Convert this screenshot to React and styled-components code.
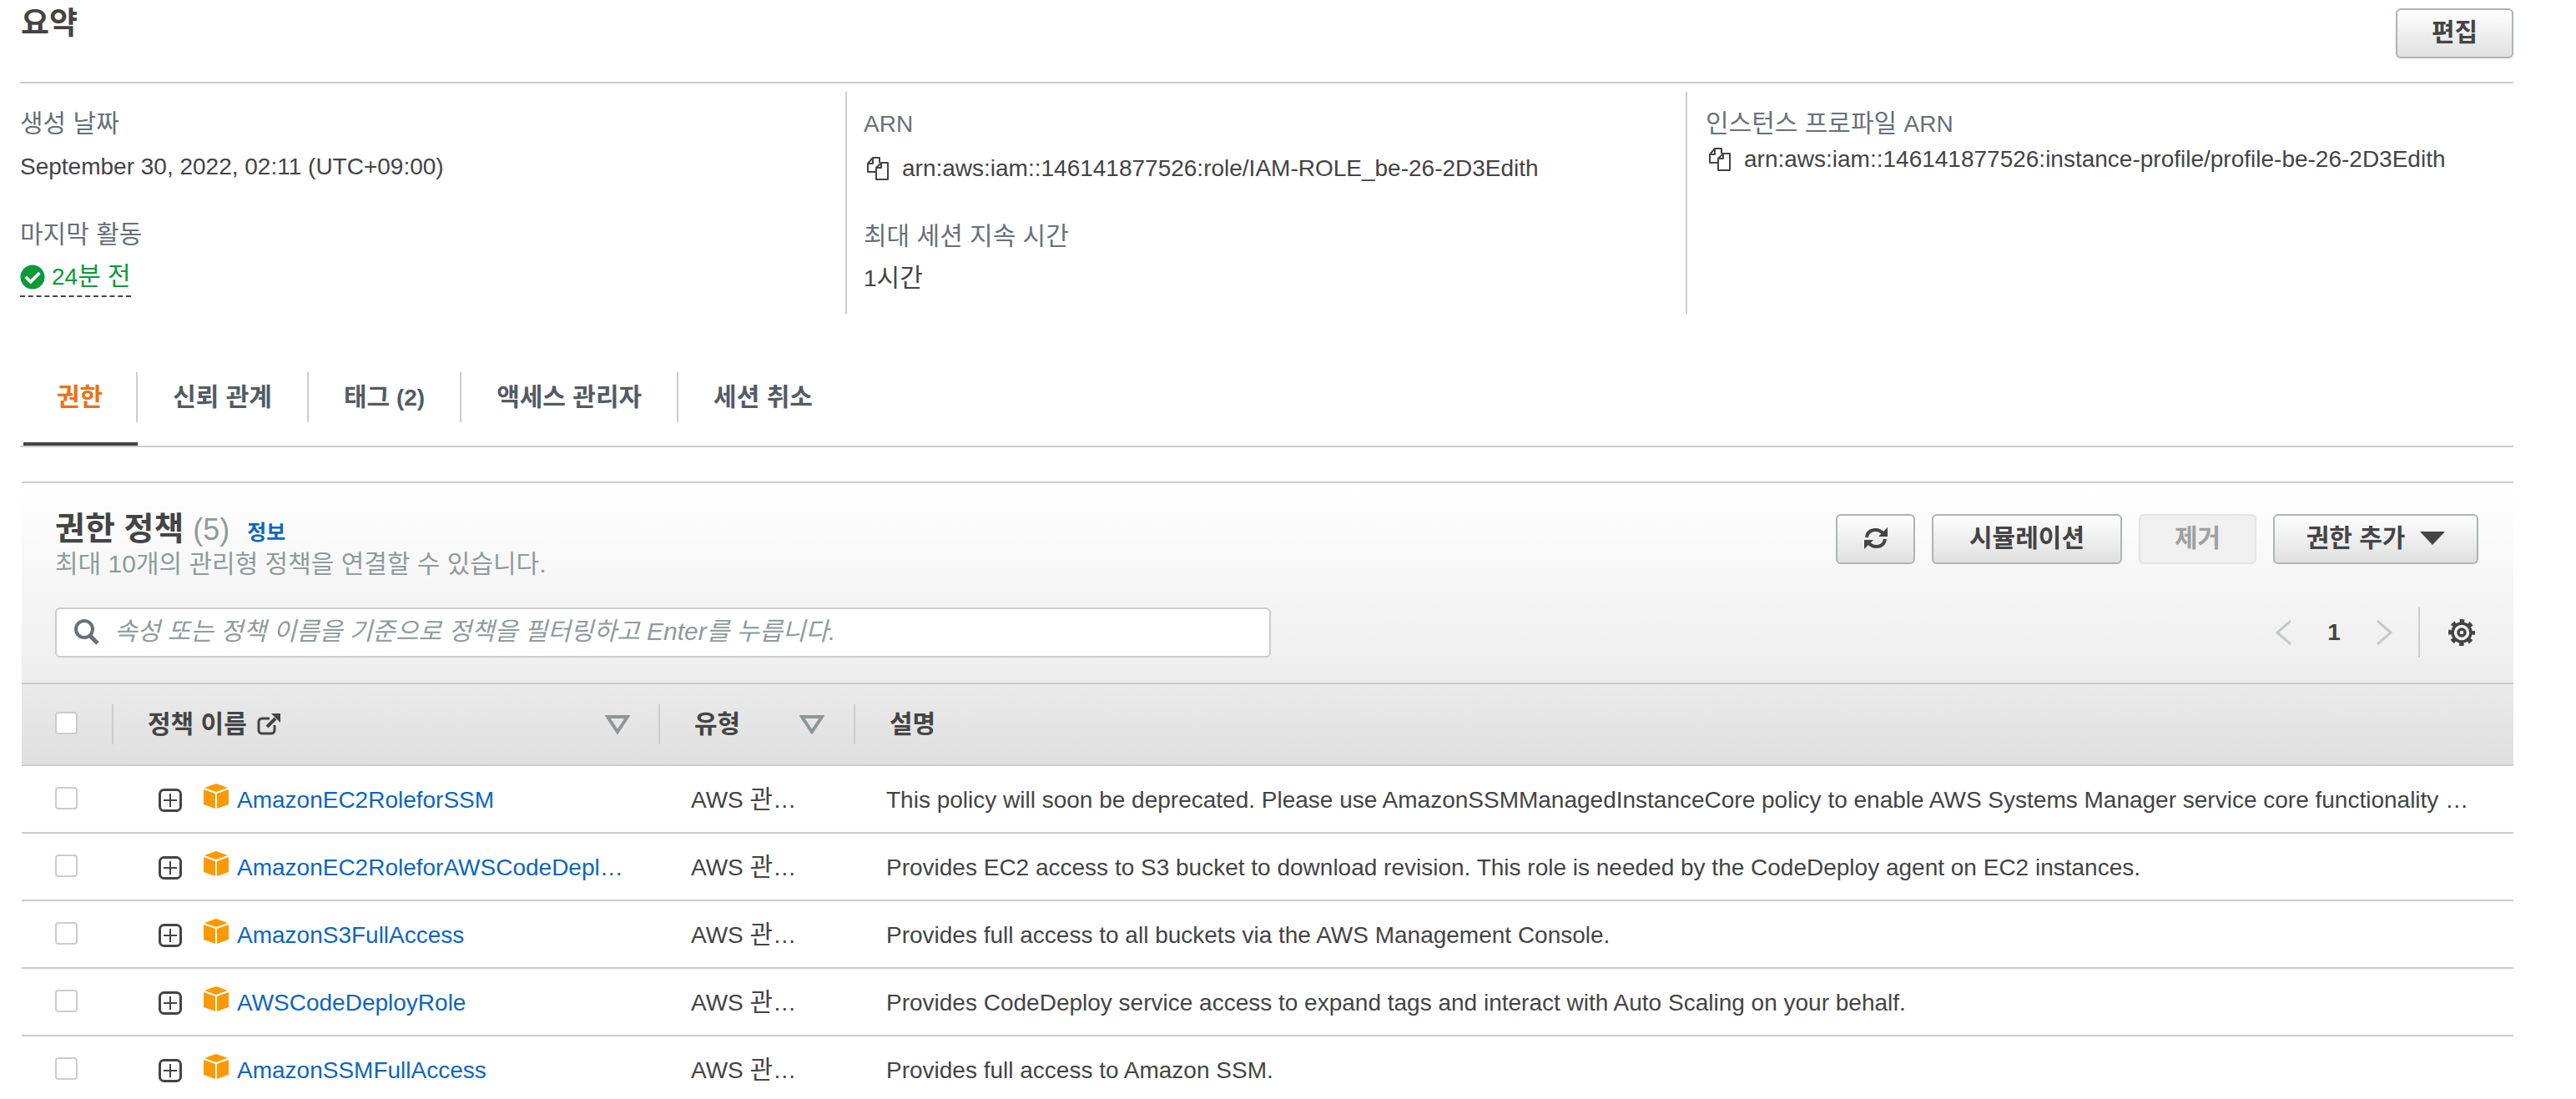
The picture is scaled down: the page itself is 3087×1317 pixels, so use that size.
import React from "react";
import styled, { createGlobalStyle } from "styled-components";
import { FaCheckCircle } from "react-icons/fa";

const FONT = '"Liberation Sans", "Noto Sans CJK KR", sans-serif';

const colors = {
  border: "#cccccc",
  label: "#687078",
  text: "#444444",
  link: "#0e66bf",
  green: "#0a9a3a",
  orange: "#ec7211",
  muted: "#8f9b9c",
};

const policies = [
  {
    name: "AmazonEC2RoleforSSM",
    desc: "This policy will soon be deprecated. Please use AmazonSSMManagedInstanceCore policy to enable AWS Systems Manager service core functionality on EC2.",
  },
  {
    name: "AmazonEC2RoleforAWSCodeDeployRole",
    desc: "Provides EC2 access to S3 bucket to download revision. This role is needed by the CodeDeploy agent on EC2 instances.",
  },
  {
    name: "AmazonS3FullAccess",
    desc: "Provides full access to all buckets via the AWS Management Console.",
  },
  {
    name: "AWSCodeDeployRole",
    desc: "Provides CodeDeploy service access to expand tags and interact with Auto Scaling on your behalf.",
  },
  {
    name: "AmazonSSMFullAccess",
    desc: "Provides full access to Amazon SSM.",
  },
];

const tabs = ["권한", "신뢰 관계", "태그", "액세스 관리자", "세션 취소"];

const CopyIcon = () => (
  <svg width="28" height="28" viewBox="0 0 28 28" fill="none" stroke="#444" strokeWidth="2" strokeLinejoin="round">
    <path d="M11 18H2V8l6-7h8v6" />
    <path d="M8 1v7H2" />
    <path d="M12 13l6-6h8v20H12z" />
    <path d="M18 7v6h-6" />
  </svg>
);

const SearchIcon = () => (
  <svg width="32" height="32" viewBox="0 0 32 32" fill="none" stroke="#687078">
    <circle cx="13" cy="13" r="10" strokeWidth="4" />
    <path d="M20 21l9 9" strokeWidth="5" />
  </svg>
);

const RefreshIcon = () => (
  <svg width="30" height="28" viewBox="0 0 30 28" fill="none" stroke="#444" strokeWidth="4">
    <path d="M4 13C5 3 18 1 24 9" />
    <path d="M26 15C25 25 12 27 6 19" />
    <path d="M29 1v11H18z" fill="#444" stroke="none" />
    <path d="M1 27V16h11z" fill="#444" stroke="none" />
  </svg>
);

const ExternalIcon = () => (
  <svg width="28" height="26" viewBox="0 0 28 26" fill="none" stroke="#444">
    <path d="M15 6H6a4 4 0 0 0-4 4v10a4 4 0 0 0 4 4h11a4 4 0 0 0 4-4v-6" strokeWidth="3" />
    <path d="M12 16L22 6" strokeWidth="4" />
    <path d="M17 0h11v11z" fill="#444" stroke="none" />
  </svg>
);

const SortIcon = () => (
  <svg width="30" height="24" viewBox="0 0 30 24" fill="none" stroke="#8f9596" strokeWidth="4">
    <path d="M3 3h24L15 21z" />
  </svg>
);

const GearIcon = () => (
  <svg width="32" height="32" viewBox="0 0 32 32" fill="none" stroke="#444">
    <circle cx="16" cy="16" r="4" strokeWidth="3.500" />
    <circle cx="16" cy="16" r="11" strokeWidth="3.500" />
    <circle cx="16" cy="16" r="14" strokeWidth="4" strokeDasharray="5.500 5.500" strokeDashoffset="2.750" />
  </svg>
);

const PlusIcon = () => (
  <svg width="28" height="28" viewBox="0 0 28 28" fill="none" stroke="#444">
    <rect x="1.500" y="1.500" width="25" height="25" rx="5" strokeWidth="3" />
    <path d="M14 6v16M6 14h16" strokeWidth="2" />
  </svg>
);

const CubeIcon = () => (
  <svg width="30" height="30" viewBox="0 0 30 30" fill="#ff9900">
    <path d="M15 0l14 5-14 5L1 5z" />
    <path d="M0 7l14 5v18L0 25z" />
    <path d="M30 7l-14 5v18l14-5z" />
  </svg>
);

const ChevronIcon = ({ flip }) => (
  <svg width="20" height="30" viewBox="0 0 20 30" fill="none" stroke="#c4c8c9" strokeWidth="3">
    <path d={flip ? "M2 1l16 14L2 29" : "M18 1L2 15l16 14"} />
  </svg>
);

const App = () => (
  <Page>
    <GlobalStyle />

    <SummaryHeader>
      <PageTitle>요약</PageTitle>
      <Button>편집</Button>
    </SummaryHeader>

    <SummaryGrid>
      <SummaryColumn>
        <FieldLabel>생성 날짜</FieldLabel>
        <FieldValue>September 30, 2022, 02:11 (UTC+09:00)</FieldValue>
        <FieldLabel $spaced>마지막 활동</FieldLabel>
        <FieldValue $gap={18}>
          <StatusText>
            <FaCheckCircle size={30} />
            <span>
              24<Hangul>분 전</Hangul>
            </span>
          </StatusText>
        </FieldValue>
      </SummaryColumn>

      <SummaryColumn $divided>
        <FieldLabel>
          <Latin>ARN</Latin>
        </FieldLabel>
        <FieldValue $gap={21}>
          <CopyLine>
            <CopyIcon />
            arn:aws:iam::146141877526:role/IAM-ROLE_be-26-2D3Edith
          </CopyLine>
        </FieldValue>
        <FieldLabel $spaced>최대 세션 지속 시간</FieldLabel>
        <FieldValue $gap={18}>
          1<Hangul>시간</Hangul>
        </FieldValue>
      </SummaryColumn>

      <SummaryColumn $divided $inset={22}>
        <FieldLabel>
          인스턴스 프로파일 <Latin>ARN</Latin>
        </FieldLabel>
        <FieldValue $gap={10}>
          <CopyLine>
            <CopyIcon />
            arn:aws:iam::146141877526:instance-profile/profile-be-26-2D3Edith
          </CopyLine>
        </FieldValue>
      </SummaryColumn>
    </SummaryGrid>

    <TabBar>
      {tabs.map((tab, index) => (
        <Tab key={tab} $active={index === 0}>
          <TabLabel $active={index === 0} $last={index === tabs.length - 1}>
            {tab}
            {tab === "태그" && <Latin> (2)</Latin>}
          </TabLabel>
        </Tab>
      ))}
    </TabBar>

    <Panel>
      <PanelHead>
        <Toolbar>
          <div>
            <PanelTitle>
              권한 정책 <PanelCount>(5)</PanelCount>
              <InfoLink>정보</InfoLink>
            </PanelTitle>
            <PanelSub>최대 10개의 관리형 정책을 연결할 수 있습니다.</PanelSub>
          </div>
          <Actions>
            <Button $icon>
              <RefreshIcon />
            </Button>
            <Button $wide>시뮬레이션</Button>
            <Button $disabled>제거</Button>
            <Button $menu>
              권한 추가
              <Caret />
            </Button>
          </Actions>
        </Toolbar>

        <FilterRow>
          <SearchBox>
            <SearchIcon />
            <Placeholder>속성 또는 정책 이름을 기준으로 정책을 필터링하고 Enter를 누릅니다.</Placeholder>
          </SearchBox>
          <Pager>
            <ChevronIcon />
            <PageNumber>1</PageNumber>
            <ChevronIcon flip />
            <PagerDivider />
            <GearIcon />
          </Pager>
        </FilterRow>
      </PanelHead>

      <HeaderRow>
        <CheckCell>
          <Checkbox $filled />
        </CheckCell>
        <HeaderCell $sort>
          <HeaderName>
            정책 이름
            <ExternalIcon />
          </HeaderName>
          <SortIcon />
        </HeaderCell>
        <HeaderCell $sort $narrow>
          <HeaderName>유형</HeaderName>
          <SortIcon />
        </HeaderCell>
        <HeaderCell>
          <HeaderName>설명</HeaderName>
        </HeaderCell>
      </HeaderRow>

      {policies.map((policy) => (
        <PolicyRow key={policy.name}>
          <CheckCell>
            <Checkbox />
          </CheckCell>
          <NameCell>
            <PlusIcon />
            <CubeWrap>
              <CubeIcon />
            </CubeWrap>
            <PolicyLink>{policy.name}</PolicyLink>
          </NameCell>
          <TypeCell>
            <Clipped>
              AWS <Hangul>관리형</Hangul>
            </Clipped>
          </TypeCell>
          <DescCell>{policy.desc}</DescCell>
        </PolicyRow>
      ))}
    </Panel>
  </Page>
);

const GlobalStyle = createGlobalStyle`
  html, body {
    margin: 0;
    height: 100%;
    overflow: hidden;
    background: #fff;
  }
  * {
    box-sizing: border-box;
  }
`;

const Page = styled.div`
  width: 3087px;
  height: 1317px;
  overflow: hidden;
  padding: 0 75px 0 24px;
  font-family: ${FONT};
  font-size: 28px;
  line-height: 32px;
  color: ${colors.text};
`;

// the hangul in the reference runs wider than the latin beside it
const Hangul = styled.span`
  font-size: 30px;
`;

const Latin = styled.span`
  font-size: 28px;
`;

const SummaryHeader = styled.div`
  display: flex;
  justify-content: space-between;
  height: 100px;
  padding-top: 10px;
  border-bottom: 2px solid ${colors.border};
`;

const PageTitle = styled.h2`
  margin: -3px 0 0 1px;
  font-size: 37px;
  line-height: 44px;
  font-weight: 700;
`;

const Button = styled.div`
  display: flex;
  align-items: center;
  justify-content: center;
  gap: 18px;
  height: 60px;
  padding-bottom: 2px;
  width: ${({ $icon, $wide, $disabled, $menu }) =>
    $icon ? "95px" : $wide ? "228px" : $disabled ? "141px" : $menu ? "246px" : "141px"};
  border: 2px solid ${({ $disabled }) => ($disabled ? "#e4e4e4" : "#aeb4b4")};
  border-radius: 6px;
  background: ${({ $disabled }) =>
    $disabled ? "#f0f0f0" : "linear-gradient(#fefefe, #e0e0e0)"};
  color: ${({ $disabled }) => ($disabled ? "#a0a0a0" : colors.text)};
  font-size: 30px;
  font-weight: 700;
`;

const SummaryGrid = styled.div`
  display: grid;
  grid-template-columns: 989px 1007px 1fr;
  height: 266px;
  margin-top: 10px;
`;

const SummaryColumn = styled.div`
  padding: 22px 0 0 ${({ $divided, $inset }) => ($divided ? `${$inset ?? 20}px` : "0")};
  border-left: ${({ $divided }) => ($divided ? `2px solid ${colors.border}` : "none")};
`;

const FieldLabel = styled.div`
  margin-top: ${({ $spaced }) => ($spaced ? "49px" : "0")};
  color: ${colors.label};
  font-size: 30px;
`;

const FieldValue = styled.div`
  margin-top: ${({ $gap }) => $gap ?? 20}px;
`;

const StatusText = styled.span`
  display: inline-flex;
  align-items: center;
  gap: 8px;
  padding-bottom: 6px;
  border-bottom: 2px dashed ${colors.text};
  color: ${colors.green};
`;

const CopyLine = styled.div`
  display: flex;
  align-items: center;
  gap: 15px;
  padding-left: 3px;
`;

const TabBar = styled.div`
  display: flex;
  margin-top: 70px;
  padding-left: 4px;
  border-bottom: 2px solid ${colors.border};
`;

const Tab = styled.div`
  padding-bottom: 24px;
  border-bottom: 4px solid ${({ $active }) => ($active ? colors.text : "transparent")};
`;

const TabLabel = styled.div`
  height: 60px;
  padding: 0 ${({ $active }) => ($active ? "40px" : "42px")};
  border-right: ${({ $last }) => ($last ? "none" : `2px solid ${colors.border}`)};
  font-size: 30px;
  line-height: 60px;
  font-weight: 700;
  color: ${({ $active }) => ($active ? colors.orange : "#545b64")};
`;

const Panel = styled.div`
  margin: 41px 0 0 2px;
  border-top: 2px solid ${colors.border};
`;

const PanelHead = styled.div`
  height: 239px;
  padding: 33px 42px 0 40px;
  background: linear-gradient(#ffffff, #ededed);
`;

const Toolbar = styled.div`
  display: flex;
  justify-content: space-between;
`;

const PanelTitle = styled.div`
  height: 44px;
  font-size: 39px;
  line-height: 44px;
  font-weight: 700;
`;

const PanelCount = styled.span`
  font-weight: 400;
  font-size: 36px;
  color: ${colors.muted};
`;

const InfoLink = styled.span`
  margin-left: 21px;
  font-size: 25px;
  color: ${colors.link};
`;

const PanelSub = styled.div`
  margin-top: 4px;
  font-size: 30px;
  color: ${colors.muted};
`;

const Actions = styled.div`
  display: flex;
  gap: 20px;
  padding-top: 4px;
`;

const Caret = styled.span`
  width: 0;
  height: 0;
  border-style: solid;
  border-width: 16px 15px 0;
  border-color: ${colors.text} transparent transparent;
`;

const FilterRow = styled.div`
  display: flex;
  justify-content: space-between;
  align-items: center;
  margin-top: 36px;
`;

const SearchBox = styled.div`
  display: flex;
  align-items: center;
  gap: 17px;
  width: 1457px;
  height: 60px;
  padding: 0 0 2px 20px;
  border: 2px solid ${colors.border};
  border-radius: 6px;
  background: #fff;
`;

const Placeholder = styled.span`
  font-size: 30px;
  font-style: italic;
  color: ${colors.muted};
`;

const Pager = styled.div`
  display: flex;
  align-items: center;
  height: 60px;
  margin-right: 4px;
`;

const PageNumber = styled.span`
  width: 100px;
  text-align: center;
  font-weight: 700;
`;

const PagerDivider = styled.span`
  width: 2px;
  height: 60px;
  margin: 0 34px 0 31px;
  background: ${colors.border};
`;

const HeaderRow = styled.div`
  display: grid;
  grid-template-columns: 108px 655px 234px 1fr;
  align-items: center;
  height: 100px;
  border-top: 2px solid ${colors.border};
  border-bottom: 2px solid ${colors.border};
  background: linear-gradient(#eaeaea, #dfdfdf);
`;

const CheckCell = styled.div`
  display: flex;
  padding: 0 0 4px 40px;
`;

const Checkbox = styled.span`
  width: 27px;
  height: 27px;
  border: 2px solid ${colors.border};
  border-radius: 4px;
  background: ${({ $filled }) => ($filled ? "#fff" : "transparent")};
`;

const HeaderCell = styled.div`
  display: flex;
  align-items: center;
  justify-content: space-between;
  height: 48px;
  padding: 0 ${({ $narrow }) => ($narrow ? "35px" : "34px")} 0 41px;
  border-left: 2px solid ${colors.border};
`;

const HeaderName = styled.span`
  display: flex;
  align-items: center;
  gap: 12px;
  font-size: 30px;
  font-weight: 700;
`;

const PolicyRow = styled.div`
  display: grid;
  grid-template-columns: 109px 654px 234px 1fr;
  align-items: center;
  height: 81px;
  padding-top: 2px;
  border-bottom: 2px solid ${colors.border};
`;

const NameCell = styled.div`
  display: flex;
  align-items: center;
  padding-left: 55px;
`;

const CubeWrap = styled.span`
  display: flex;
  margin: -10px 10px 0 26px;
`;

const PolicyLink = styled.span`
  max-width: 472px;
  overflow: hidden;
  white-space: nowrap;
  text-overflow: ellipsis;
  color: ${colors.link};
`;

const TypeCell = styled.div`
  padding-left: 39px;
`;

const Clipped = styled.div`
  width: 128px;
  overflow: hidden;
  white-space: nowrap;
  text-overflow: ellipsis;
`;

const DescCell = styled.div`
  min-width: 0;
  padding: 0 50px 0 39px;
  overflow: hidden;
  white-space: nowrap;
  text-overflow: ellipsis;
`;

export default App;
